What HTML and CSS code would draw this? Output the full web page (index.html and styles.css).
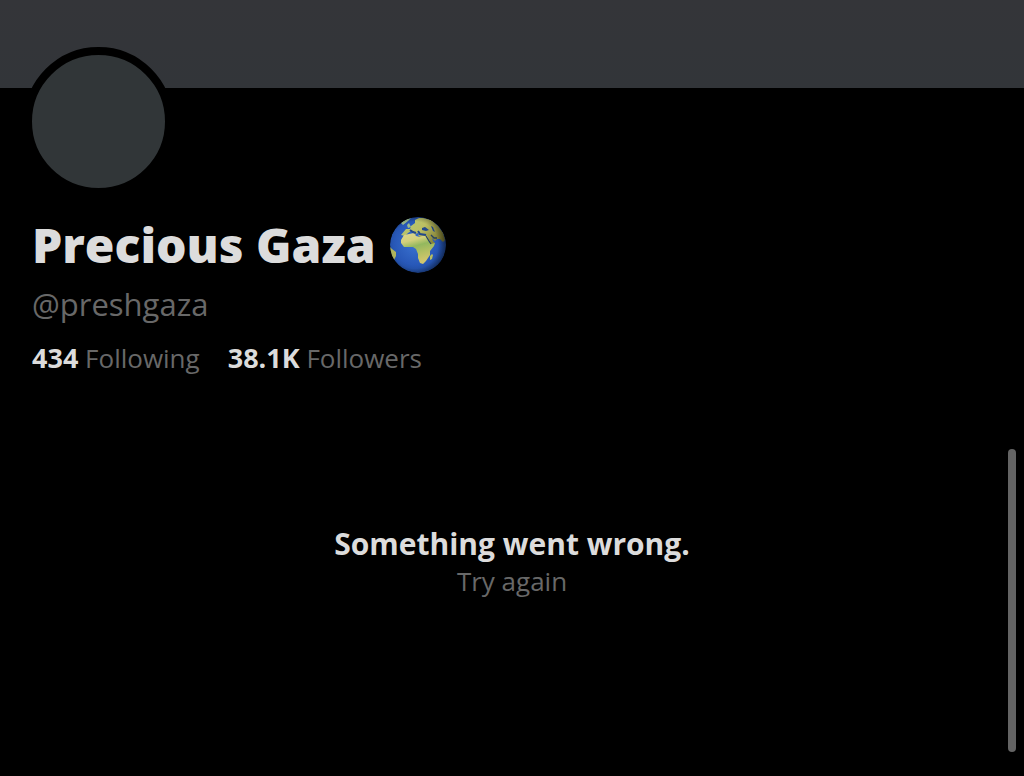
FILE: index.html
```html
<!DOCTYPE html>
<html lang="en">
  <head>
    <meta charset="UTF-8" />
    <meta name="viewport" content="width=device-width, initial-scale=1.0" />
    <title>Precious Gaza (@preshgaza)</title>
    <link rel="stylesheet" href="styles.css">
  </head>
  <body>
    <div class="banner"></div>
    <main>
      <section class="profile">
        <div class="avatar"></div>
        <h1>
          Precious Gaza
          <svg class="globe" viewBox="0 0 56 56" role="img" aria-label="Globe">
            <defs>
              <radialGradient id="sea" cx="45%" cy="48%" r="58%">
                <stop offset="0" stop-color="#3a72d0" />
                <stop offset="0.65" stop-color="#2858b8" />
                <stop offset="1" stop-color="#1c448e" />
              </radialGradient>
              <linearGradient id="land" x1="0" y1="0" x2="1" y2="0.6">
                <stop offset="0" stop-color="#b4c878" />
                <stop offset="0.5" stop-color="#bcbf62" />
                <stop offset="1" stop-color="#77742f" />
              </linearGradient>
              <linearGradient id="africa" x1="0" y1="0" x2="0.3" y2="1">
                <stop offset="0" stop-color="#dfd58e" />
                <stop offset="0.3" stop-color="#d3d07c" />
                <stop offset="0.5" stop-color="#93b85e" />
                <stop offset="0.75" stop-color="#b5c063" />
                <stop offset="1" stop-color="#d0c66e" />
              </linearGradient>
              <radialGradient id="shade" cx="44%" cy="50%" r="56%">
                <stop offset="0.75" stop-color="#000" stop-opacity="0" />
                <stop offset="1" stop-color="#000" stop-opacity="0.4" />
              </radialGradient>
              <clipPath id="ball"><circle cx="28" cy="28" r="28" /></clipPath>
            </defs>
            <g clip-path="url(#ball)">
              <circle cx="28" cy="28" r="28" fill="url(#sea)" />
              <!-- greenland and britain -->
              <path fill="#9dbd8c" d="M11 6l5-4 5-1-3 3-5 4zM17 8l2-2 1 2 1 2-3 1z" />
              <!-- europe and asia -->
              <path fill="url(#land)" d="M16 12l4 0 1-3 4-3 0-3 4-2 4 0 8 2 7 6 5 7 2 7-2 2-3-3-3 0-2 2-3-3 1 3 2 2-3 4-4 1-3-7-1-4-4 0-2-2 2-1-3-1-2 2-2-4-2 0-3 2-3 3-4-1z" />
              <!-- africa -->
              <path fill="url(#africa)" d="M11 23l3-5 5-1 5-1 2 3 4 1 2-1 5 0 2 4 2 4 4-1-1 3-4 5 0 4-2 3-2 3-3 3-3-1-2-5 0-4-2-5-3-2-5 0-4 0-3-4z" />
              <!-- madagascar -->
              <path fill="#b5bd62" d="M42 37l1 1-1 4-2 1 0-4z" />
              <!-- inland seas and gulfs -->
              <path fill="#24498c" d="M32 11l3-1 4 3-3 1-4-1zM41 9l2 1 2 5-2-1z" />
              <path fill="none" stroke="#24498c" stroke-width="2" d="M20 13l3 2 3 1M28 14l2 3 6 1" />
              <path fill="none" stroke="#263f62" stroke-width="1.3" d="M36 19l3 5 2 3M41 18l3 3 3 0" />
              <!-- south america -->
              <path fill="#b0b45c" d="M0 30l2 2 4 3 0 4-2 4-3-2z" />
              <circle cx="28" cy="28" r="28" fill="url(#shade)" />
            </g>
          </svg>
        </h1>
        <p class="handle">@preshgaza</p>
        <div class="stats">
          <a href="#following"><b>434</b> Following</a>
          <a href="#followers"><b>38.1K</b> Followers</a>
        </div>
      </section>
      <section class="error">
        <h2>Something went wrong.</h2>
        <button type="button">Try again</button>
      </section>
    </main>
    <div class="scrollbar"></div>
  </body>
</html>
```

FILE: styles.css
```css
* {
  margin: 0;
  padding: 0;
  box-sizing: border-box;
}
body {
  background-color: #000;
  color: #dcdcdc;
  font-family: "Open Sans", sans-serif;
}
.banner {
  height: 88px;
  background-image: linear-gradient(#343539, #323539);
}
.profile {
  padding: 0 24px;
}
.avatar {
  width: 149px;
  height: 149px;
  margin-top: -41px;
  border: 8px solid #000;
  border-radius: 50%;
  background-color: #313638;
  position: relative;
}
h1 {
  display: flex;
  align-items: center;
  gap: 14px;
  margin-top: 16px;
  padding-left: 8px;
  font-size: 48px;
  line-height: 66px;
  font-weight: 800;
}
.globe {
  width: 56px;
  height: 56px;
}
.handle {
  padding-left: 8px;
  margin-top: 6px;
  font-size: 31px;
  line-height: 40px;
  color: #686868;
}
.stats {
  display: flex;
  gap: 28px;
  margin-top: 16px;
  padding-left: 8px;
  font-size: 26px;
  line-height: 36px;
}
.stats a {
  color: #686868;
  text-decoration: none;
}
.stats b {
  color: #dcdcdc;
  font-size: 27px;
}
.error {
  margin-top: 148px;
  text-align: center;
}
h2 {
  font-size: 30px;
  line-height: 40px;
  font-weight: 700;
}
button {
  border: none;
  background: none;
  color: #686868;
  font-family: inherit;
  font-size: 26px;
  line-height: 34px;
  cursor: pointer;
}
.scrollbar {
  position: fixed;
  right: 8px;
  bottom: 24px;
  width: 8px;
  height: 39vh;
  border-radius: 4px;
  background-color: #646464;
}
```
